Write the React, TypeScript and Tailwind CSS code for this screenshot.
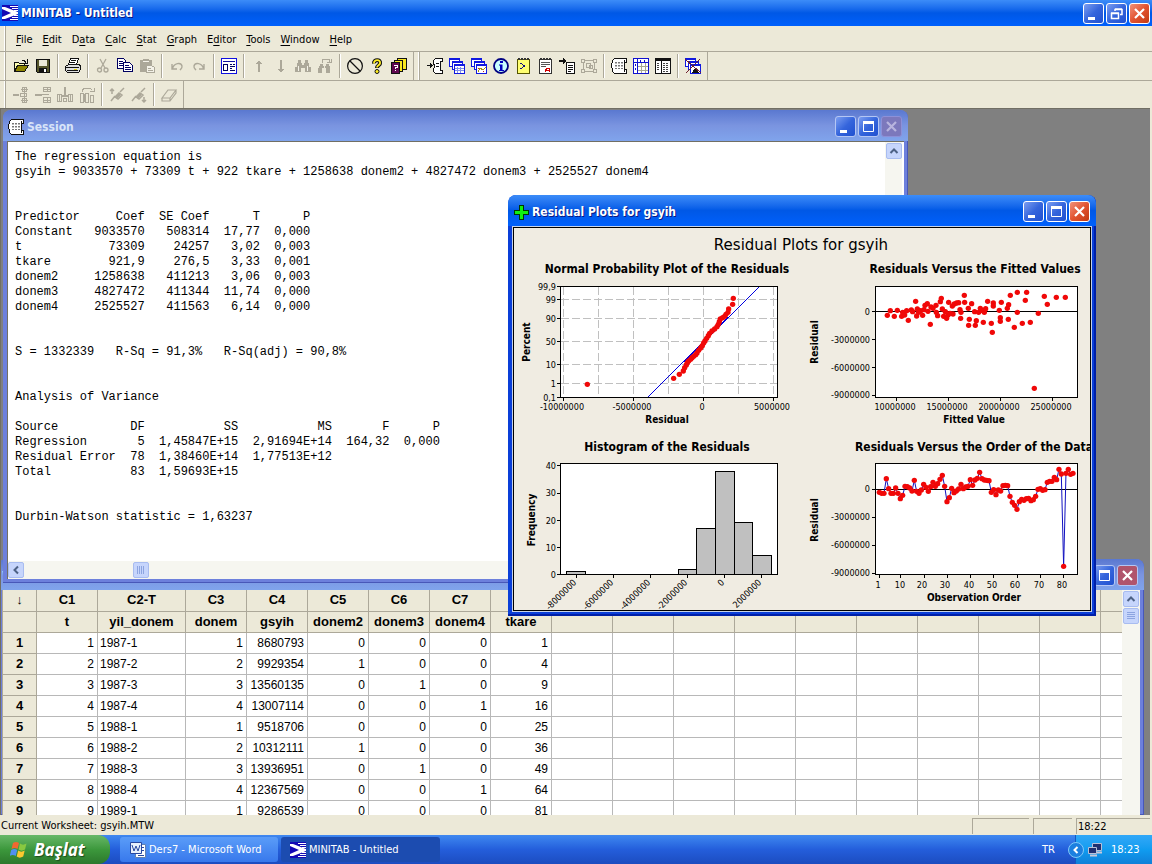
import React from 'react';
import clsx from 'clsx';

const INK = '#111111';
const OFF = '#aca899';

const Icon: React.FC<{ children: React.ReactNode; smooth?: boolean }> = ({ children, smooth }) => (
  <svg
    width="18"
    height="18"
    viewBox="-1 -1 18 18"
    fill="none"
    className="shrink-0"
    shapeRendering={smooth ? 'auto' : 'crispEdges'}
    aria-hidden="true"
  >
    {children}
  </svg>
);

const MinitabLogo: React.FC = () => (
  <svg width="16" height="16" viewBox="0 0 16 16" className="shrink-0" aria-hidden="true">
    <path d="M0 0h16v16H0z" fill="#1408b4" />
    <path d="M0 2h3l13 5v2L3 14H0v-2l9-4L0 4z" fill="#fff" />
    <path d="M8 1.500h8M10 3.500h6M12 5.500h4M12 10.500h4M10 12.500h6M8 14.500h8" stroke="#fff" />
  </svg>
);

const Scroll: React.FC = () => (
  <>
    <path
      d="M3.500.500h12v4h-2v7h2v4h-12l-2-2v-3l-1-1v-4l1-1v-2z"
      fill="#fff"
      stroke={INK}
    />
    <path d="M13.500 2v2M13.500 12v2" stroke={INK} />
    <path d="M4 4.500h8M4 7.500h8M4 10.500h8" stroke="#777" strokeDasharray="2 1" />
    <path d="M4 5.500h8M4 8.500h8" stroke="#bbb" strokeDasharray="2 1" />
  </>
);

const Stack: React.FC = () => (
  <>
    <path d="M.5.500h10v8H.5z" fill="#fff" stroke="#1018e0" />
    <path d="M1 1.500h10" stroke="#1018e0" />
    <path d="M3.500 3.500h10v8h-10z" fill="#fff" stroke="#1018e0" />
    <path d="M4 4.500h10" stroke="#1018e0" />
    <path d="M5.500 6.500h10v9h-10z" fill="#fff" stroke="#1018e0" />
    <path d="M6 7.500h10" stroke="#1018e0" />
  </>
);

const Binoculars: React.FC = () => (
  <>
    <path d="M3 2h3v3H3zM10 2h3v3h-3zM2 5h5v4H2zM9 5h5v4H9zM0 9h6v5H0zM10 9h6v5h-6zM6 7h4v3H6z" fill={OFF} />
    <path d="M3.500 8v5M12.500 8v5" stroke="#f4f2e8" />
  </>
);

type Tool = { label: string; icon: React.ReactNode; disabled?: boolean } | '|';

const FILE_TOOLS: Tool[] = [
  {
    label: 'Open',
    icon: (
      <Icon>
        <path d="M1 14V4h4l1 1h5v3" fill="#ffffb0" stroke={INK} />
        <path d="M1.500 13.500l3-6h11l-4 6z" fill="#8c8400" stroke={INK} />
        <path d="M9 2.500h2l2 2M14.500 1v4h-4" stroke={INK} />
      </Icon>
    ),
  },
  {
    label: 'Save',
    icon: (
      <Icon>
        <path d="M1.500 1.500h13v13h-12l-1-1z" fill="#55552a" stroke={INK} />
        <path d="M4 2h8v6H4z" fill="#ece9d8" />
        <path d="M4 10h8v4H4z" fill={INK} />
        <path d="M9 11h2v3H9z" fill="#fff" />
      </Icon>
    ),
  },
  '|',
  {
    label: 'Print',
    icon: (
      <Icon>
        <path d="M5.500.500h8l-2 6h-8z" fill="#fff" stroke={INK} />
        <path d="M.5 8.500l3-2h10l2 1v4l-2 3h-11l-2-2z" fill="#ddd" stroke={INK} />
        <path d="M1 9.500h13M2 12.500h11M6 2.500h5M5 4.500h5" stroke={INK} />
        <path d="M9 11h3v1H9z" fill="#e0d000" />
      </Icon>
    ),
  },
  '|',
  {
    label: 'Cut',
    disabled: true,
    icon: (
      <Icon smooth>
        <path d="M5 1l5 9M11 1L6 10" stroke={OFF} strokeWidth="1.300" />
        <circle cx="4.500" cy="12" r="2" stroke={OFF} strokeWidth="1.300" />
        <circle cx="11" cy="12" r="2" stroke={OFF} strokeWidth="1.300" />
      </Icon>
    ),
  },
  {
    label: 'Copy',
    icon: (
      <Icon>
        <path d="M.5.500h6l2 2v8h-8z" fill="#fff" stroke="#000060" />
        <path d="M2 3.500h4M2 5.500h5M2 7.500h5" stroke="#000060" />
        <path d="M6.500 4.500h6l3 3v6h-9z" fill="#fff" stroke="#000060" />
        <path d="M8 7.500h4M8 9.500h6M8 11.500h6" stroke="#000060" />
      </Icon>
    ),
  },
  {
    label: 'Paste',
    disabled: true,
    icon: (
      <Icon>
        <path d="M1 2h12v12H1zM4 1h6v1H4z" fill={OFF} />
        <path d="M4 3.500h6" stroke="#f4f2e8" />
        <path d="M7.500 7.500h5l3 2v5h-8z" fill="#f4f2e8" stroke={OFF} />
        <path d="M9 10.500h3M9 12.500h5" stroke={OFF} />
      </Icon>
    ),
  },
  '|',
  {
    label: 'Undo',
    disabled: true,
    icon: (
      <Icon smooth>
        <path d="M3 6v5h5M3.500 10.500C5 5 12 4 13 8c.4 2-1 3-2 4" stroke={OFF} strokeWidth="1.400" />
      </Icon>
    ),
  },
  {
    label: 'Redo',
    disabled: true,
    icon: (
      <Icon smooth>
        <path d="M13 6v5H8M12.500 10.500C11 5 4 4 3 8c-.4 2 1 3 2 4" stroke={OFF} strokeWidth="1.400" />
      </Icon>
    ),
  },
  '|',
  {
    label: 'Project Manager',
    icon: (
      <Icon>
        <path d="M.5.500h15v15H.5z" fill="#fff" stroke="#1010e0" />
        <path d="M2 3.500h12" stroke="#1010a0" />
        <path d="M2.500 6.500h4v6h-4zM9 6.500h2M12 6.500h2M9 8.500h5M9 10.500h2M9 12.500h5" stroke="#000060" />
      </Icon>
    ),
  },
  '|',
  {
    label: 'Previous Command',
    disabled: true,
    icon: (
      <Icon>
        <path d="M7 4h2v10H7zM5 5h6v1H5zM6 4h4v1H6zM7 3h2v1H7z" fill={OFF} />
      </Icon>
    ),
  },
  {
    label: 'Next Command',
    disabled: true,
    icon: (
      <Icon>
        <path d="M7 2h2v10H7zM5 11h6v1H5zM6 12h4v1H6zM7 13h2v1H7z" fill={OFF} />
      </Icon>
    ),
  },
  { label: 'Find', disabled: true, icon: <Icon><Binoculars /></Icon> },
  {
    label: 'Find Next',
    disabled: true,
    icon: (
      <Icon>
        <path d="M3 6h3v2H3zM9 6h3v2H9zM2 8h5v2H2zM8 8h5v2H8zM1 10h4v5H1zM9 10h4v5H9z" fill={OFF} />
        <path d="M5 4.500v-1l1-2h6l1 2M10 4.500h4v-4" stroke={OFF} />
      </Icon>
    ),
  },
  '|',
  {
    label: 'Cancel',
    icon: (
      <Icon smooth>
        <circle cx="8" cy="8" r="7.400" stroke={INK} strokeWidth="1.200" />
        <path d="M3 3l10 10" stroke={INK} strokeWidth="1.200" />
      </Icon>
    ),
  },
  {
    label: 'Help',
    icon: (
      <Icon smooth>
        <path d="M5 5.500C4.500 1 12 1 11 5.500c-.4 1.800-3 2-3 4.500" stroke={INK} strokeWidth="4" />
        <path d="M5 5.500C4.500 1 12 1 11 5.500c-.4 1.800-3 2-3 4" stroke="#ffee20" strokeWidth="1.800" />
        <circle cx="8" cy="13.500" r="2" fill="#ffee20" stroke={INK} />
      </Icon>
    ),
  },
  {
    label: 'StatGuide',
    icon: (
      <Icon>
        <path d="M6.500.500h9v11h-9z" fill="#f8e820" stroke={INK} />
        <path d="M3.500 2.500h8v11h-8z" fill="#f8e820" stroke={INK} />
        <path d="M.5 4.500h8v11h-8z" fill="#600850" stroke={INK} />
        <path d="M3 7.500h3v2H4.500v1M4 12.500h1" stroke="#fff" />
      </Icon>
    ),
  },
];

const WINDOW_TOOLS: Tool[] = [
  {
    label: 'Show Session Folder',
    icon: (
      <Icon>
        <path d="M8.500.500h7v3h-2v9h2v3h-7l-2-2v-3l1-1v-2l-1-2v-3z" fill="#fff" stroke={INK} />
        <path d="M0 7.500h6M3.500 5v5M4.500 6v3M9 5.500h3M9 8.500h3" stroke={INK} />
      </Icon>
    ),
  },
  {
    label: 'Show Worksheets Folder',
    icon: (
      <Icon>
        <Stack />
        <path d="M6 10.500h9M6 12.500h9M8.500 9v6M11.500 9v6" stroke="#8090e8" />
      </Icon>
    ),
  },
  {
    label: 'Show Graphs Folder',
    icon: (
      <Icon>
        <Stack />
        <path d="M7 14l2-4 3 2 3-3" stroke="#a09010" />
        <path d="M7 10h1v1H7zM12 13h1v1h-1z" fill="#c02020" />
      </Icon>
    ),
  },
  {
    label: 'Show Info',
    icon: (
      <Icon smooth>
        <circle cx="8" cy="8" r="7" fill="#c8ffff" stroke="#000080" strokeWidth="1.800" />
        <path d="M7 3h3v2H7zM6 6.500h3.500V12H11v1H6v-1h1V7.500H6z" fill="#0000c0" />
      </Icon>
    ),
  },
  {
    label: 'Show History',
    icon: (
      <Icon>
        <path d="M2.500 1.500h12v14h-12z" fill="#ffff70" stroke="#555500" />
        <path d="M3 1h11" stroke="#333" strokeWidth="2" strokeDasharray="2 1" />
        <path d="M5 5l5 3-5 3" stroke="#101080" />
      </Icon>
    ),
  },
  {
    label: 'Show ReportPad',
    icon: (
      <Icon>
        <path d="M2.500 1.500h12v14h-12z" fill="#fff" stroke="#333" />
        <path d="M3 1h11" stroke="#333" strokeWidth="2" strokeDasharray="2 1" />
        <path d="M4 4.500h9M4 6.500h9M4 8.500h5" stroke="#555" />
        <path d="M8.500 14v-2l2-2h2v4M8 12.500h4" stroke="#d00000" />
      </Icon>
    ),
  },
  {
    label: 'Show Related Documents',
    icon: (
      <Icon>
        <path d="M7.500 4.500h8v11h-8z" fill="#fff" stroke={INK} />
        <path d="M9 7.500h5M9 9.500h5M9 11.500h5M9 13.500h3" stroke={INK} />
        <path d="M0 2h4V0l3 3-3 3V4H0z" fill={INK} />
      </Icon>
    ),
  },
  {
    label: 'Show Design',
    disabled: true,
    icon: (
      <Icon>
        <path d="M2.500 2.500h11v11h-11zM5.500 5.500h4v4h-4zM8.500 7.500h3v3h-3z" stroke={OFF} />
        <path d="M0 1h4v4H0zM12 1h4v4h-4zM0 11h4v4H0zM12 11h4v4h-4z" fill={OFF} />
        <path d="M1 2h2v2H1zM13 2h2v2h-2zM1 12h2v2H1zM13 12h2v2h-2z" fill="#ece9d8" />
      </Icon>
    ),
  },
  '|',
  { label: 'Session Window', icon: <Icon><Scroll /></Icon> },
  {
    label: 'Current Data Window',
    icon: (
      <Icon>
        <path d="M.5.500h15v15H.5z" fill="#fff" stroke="#1010d0" />
        <path d="M1 4.500h15M4.500 1v15" stroke="#1010d0" />
        <path d="M5 8.500h10M5 12.500h10M8.500 5v10M12.500 5v10" stroke="#a8a890" />
        <path d="M7.500 2v2M11.500 2v2M2.500 6v2M2.500 10v2" stroke="#1010d0" />
      </Icon>
    ),
  },
  {
    label: 'Project Manager Window',
    icon: (
      <Icon>
        <path d="M.5.500h15v15H.5z" fill="#fff" stroke={INK} />
        <path d="M1 2h14" stroke={INK} strokeWidth="2" />
        <path d="M6.500 3v12" stroke={INK} />
        <path d="M2 5.500h3M2 7.500h3M2 9.500h3M2 11.500h3M8 5.500h6M8 7.500h6M8 9.500h6M8 11.500h6M8 13.500h6" stroke="#444" strokeDasharray="2 1" />
      </Icon>
    ),
  },
  '|',
  {
    label: 'Close All Graphs',
    icon: (
      <Icon>
        <Stack />
        <path d="M7 15l3-5 4 5z" fill={INK} />
        <path d="M0 1l16 14M15 1L1 15" stroke="#702030" />
      </Icon>
    ),
  },
];

const EDIT_TOOLS: Tool[] = [
  {
    label: 'Insert Cells',
    disabled: true,
    icon: (
      <Icon>
        <path d="M0 7h6v2H0z" fill={OFF} />
        <path d="M9.500.500h4v4h-4zM7.500 6.500h6v3h-6zM9.500 11.500h4v4h-4zM8 2.500h7M8 13.500h7M11.500 0v16" stroke={OFF} />
      </Icon>
    ),
  },
  {
    label: 'Insert Rows',
    disabled: true,
    icon: (
      <Icon>
        <path d="M0 7h7v2H0z" fill={OFF} />
        <path d="M8.500.500h7v4h-7zM7 7.500h7M8.500 10.500h7v5h-7zM12 0v5M12 10v5M8 2.500h8M8 13.500h8" stroke={OFF} />
      </Icon>
    ),
  },
  {
    label: 'Insert Columns',
    disabled: true,
    icon: (
      <Icon>
        <path d="M7 0h2v9H7zM5 8h6v2H5z" fill={OFF} />
        <path d="M.5 7.500h4v7h-4zM6.500 11.500h3v3h-3zM11.500 7.500h4v7h-4zM2.500 8v6M13.500 8v6" stroke={OFF} />
      </Icon>
    ),
  },
  {
    label: 'Move Columns',
    disabled: true,
    icon: (
      <Icon>
        <path d="M1.500 6.500h3v9h-3zM6.500 6.500h3v9h-3zM11.500 8.500h3v7h-3zM3.500 4.500v-2l2-1h6l2 2M11 4.500h4v-4" stroke={OFF} />
        <path d="M4 7h3v8H4z" fill={OFF} />
      </Icon>
    ),
  },
  '|',
  {
    label: 'Previous Brush',
    disabled: true,
    icon: (
      <Icon smooth>
        <path d="M2 14l4-5M6 10l4-4 3 2-4 4zM11 5l4-4M3 7V2M1 4l2-2 2 2" stroke={OFF} strokeWidth="1.500" />
        <path d="M6 10l4-4 2 2-4 4z" fill={OFF} />
      </Icon>
    ),
  },
  {
    label: 'Next Brush',
    disabled: true,
    icon: (
      <Icon smooth>
        <path d="M1 14l4-5M5 10l4-4 3 2-4 4zM10 5l4-4M13 10v5M11 13l2 2 2-2" stroke={OFF} strokeWidth="1.500" />
        <path d="M5 10l4-4 2 2-4 4z" fill={OFF} />
      </Icon>
    ),
  },
  '|',
  {
    label: 'Clear Cells',
    disabled: true,
    icon: (
      <Icon smooth>
        <path d="M1 11l6-8h8l-6 8zM1 11v3h8l6-8V3M9 11v3" stroke={OFF} strokeWidth="1.200" />
      </Icon>
    ),
  },
];

const Separator: React.FC = () => (
  <div className="flex w-2 justify-center self-stretch py-0.5">
    <div className="w-px bg-[#aca899]" />
    <div className="w-px bg-white" />
  </div>
);

const Grip: React.FC = () => <div className="mx-1 w-0.5 self-stretch border-r border-[#aca899] bg-white" />;

const Toolbar: React.FC<{ tools: Tool[]; label: string }> = ({ tools, label }) => (
  <div role="toolbar" aria-label={label} className="flex items-center border-r border-[#aca899] pr-[3px]">
    <Grip />
    {tools.map((tool, i) =>
      tool === '|' ? (
        <Separator key={i} />
      ) : (
        <button
          key={i}
          type="button"
          aria-label={tool.label}
          disabled={tool.disabled}
          className="flex h-[22px] w-[22px] items-center justify-center"
        >
          {tool.icon}
        </button>
      ),
    )}
  </div>
);

type ButtonKind = 'min' | 'max' | 'restore' | 'close';

const GLYPHS: Record<ButtonKind, React.ReactNode> = {
  min: <path d="M4 13h7v3H4z" fill="currentColor" />,
  max: (
    <>
      <path d="M4.500 5.500h10v9h-10z" stroke="currentColor" />
      <path d="M4 4h11v3H4z" fill="currentColor" />
    </>
  ),
  restore: (
    <path d="M4.500 9.500h7v5h-7zM4 9h8M8 7V5.500h7v5h-2M8 5h7" stroke="currentColor" strokeWidth="1.500" />
  ),
  close: <path d="M5 5l9 9M14 5l-9 9" stroke="currentColor" strokeWidth="2.200" />,
};

const CaptionButton: React.FC<{ kind: ButtonKind; tone?: 'active' | 'inactive' | 'off' }> = ({
  kind,
  tone = 'active',
}) => (
  <button
    type="button"
    aria-label={kind}
    disabled={tone === 'off'}
    className={clsx(
      'h-[21px] w-[21px] rounded-[3px] border',
      tone === 'active' && 'border-white text-white',
      tone === 'inactive' && 'border-[#b4c6f4] text-white',
      tone === 'off' && 'border-[#8d90d8] bg-[#7c78bc] text-[#b8b4de]',
      tone === 'active' && kind === 'close' && 'bg-linear-to-br from-[#f09078] via-[#e25330] to-[#c23a10]',
      tone === 'inactive' && kind === 'close' && 'bg-[#b0546c]',
      tone !== 'off' && kind !== 'close' && 'bg-linear-to-br from-[#7c9df0] via-[#3565dc] to-[#2050d0]',
    )}
  >
    <svg width="19" height="19" viewBox="0 0 19 19" fill="none" aria-hidden="true">
      {GLYPHS[kind]}
    </svg>
  </button>
);

const MdiWindow: React.FC<{
  title: string;
  icon?: React.ReactNode;
  active?: boolean;
  closeTone?: 'active' | 'inactive' | 'off';
  className: string;
  children: React.ReactNode;
}> = ({ title, icon, active, closeTone, className, children }) => {
  const tone = active ? 'active' : 'inactive';
  return (
    <section
      className={clsx(
        'absolute flex flex-col rounded-t-lg px-1 pb-1',
        active
          ? 'bg-[#0a3fd8] shadow-[inset_-2px_-2px_0_#0020a8]'
          : 'bg-[#6d80dc] shadow-[inset_-1px_-1px_0_#4858b8]',
        className,
      )}
    >
      <header
        className={clsx(
          '-mx-1 flex h-[31px] shrink-0 items-center gap-[2px] rounded-t-lg pt-[2px] pr-[6px] pl-1',
          active
            ? 'bg-linear-to-b from-[#3c8cf8] via-[#0058e6] to-[#0060fc]'
            : 'bg-linear-to-b from-[#5a78d0] via-[#7a94e0] to-[#80a4ec]',
        )}
      >
        {icon}
        <h2
          className={clsx(
            'flex-1 truncate text-[12px] font-bold',
            active ? 'text-white [text-shadow:1px_1px_0_#0a1883]' : 'text-[#d8e4f8]',
          )}
        >
          {title}
        </h2>
        <CaptionButton kind="min" tone={tone} />
        <CaptionButton kind="max" tone={tone} />
        <CaptionButton kind="close" tone={closeTone ?? tone} />
      </header>
      {children}
    </section>
  );
};

const ScrollButton: React.FC<{ dir: 'up' | 'left' | 'thumb-x' | 'thumb-y' }> = ({ dir }) => (
  <button
    type="button"
    aria-label={dir}
    className="flex h-4 w-4 shrink-0 items-center justify-center rounded-[2px] border border-[#a8bcf0] bg-[#c6d5fc] text-[#4d6185]"
  >
    <svg width="10" height="10" viewBox="0 0 10 10" fill="none" stroke="currentColor" aria-hidden="true">
      {dir === 'up' && <path d="M1.500 7L5 3.500 8.500 7" strokeWidth="2" />}
      {dir === 'left' && <path d="M7 1.500L3.500 5 7 8.500" strokeWidth="2" />}
      {dir === 'thumb-x' && <path d="M1.500 1v8M3.500 1v8M5.500 1v8M7.500 1v8" stroke="#8ca4e0" />}
      {dir === 'thumb-y' && <path d="M1 1.500h8M1 3.500h8M1 5.500h8M1 7.500h8" stroke="#8ca4e0" />}
    </svg>
  </button>
);

const SESSION_TEXT = `The regression equation is
gsyih = 9033570 + 73309 t + 922 tkare + 1258638 donem2 + 4827472 donem3 + 2525527 donem4


Predictor     Coef  SE Coef      T      P
Constant   9033570   508314  17,77  0,000
t            73309    24257   3,02  0,003
tkare        921,9    276,5   3,33  0,001
donem2     1258638   411213   3,06  0,003
donem3     4827472   411344  11,74  0,000
donem4     2525527   411563   6,14  0,000


S = 1332339   R-Sq = 91,3%   R-Sq(adj) = 90,8%


Analysis of Variance

Source          DF           SS           MS       F      P
Regression       5  1,45847E+15  2,91694E+14  164,32  0,000
Residual Error  78  1,38460E+14  1,77513E+12
Total           83  1,59693E+15


Durbin-Watson statistic = 1,63237`;

const HEADERS = ['C1', 'C2-T', 'C3', 'C4', 'C5', 'C6', 'C7', 'C8'];
const NAMES = ['t', 'yil_donem', 'donem', 'gsyih', 'donem2', 'donem3', 'donem4', 'tkare'];
const GSYIH = [8680793, 9929354, 13560135, 13007114, 9518706, 10312111, 13936951, 12367569, 9286539];
const SPARE = Array.from({ length: 10 }, (_, i) => i);

const ROWS = GSYIH.map((value, i) => {
  const quarter = (i % 4) + 1;
  return [
    i + 1,
    `${1987 + Math.floor(i / 4)}-${quarter}`,
    quarter,
    value,
    quarter === 2 ? 1 : 0,
    quarter === 3 ? 1 : 0,
    quarter === 4 ? 1 : 0,
    (i + 1) ** 2,
  ];
});

const Worksheet: React.FC = () => (
  <table className="w-[1159px] shrink-0 table-fixed border-collapse font-['Liberation_Sans',Arial,sans-serif] text-[12px] leading-5 [&_td]:h-[21px] [&_td]:border [&_td]:border-[#b8b8b8] [&_td]:p-0 [&_th]:h-[21px] [&_th]:border [&_th]:border-t-0 [&_th]:border-[#aca899] [&_th]:bg-[#ece9d8] [&_th]:p-0 [&_th]:text-[13px]">
    <colgroup>
      <col className="w-[34px]" />
      {HEADERS.map((h) => (
        <col key={h} className={h === 'C2-T' ? 'w-[88px]' : 'w-[61px]'} />
      ))}
      {SPARE.map((i) => (
        <col key={i} className="w-[61px]" />
      ))}
    </colgroup>
    <thead>
      <tr>
        <th>↓</th>
        {HEADERS.map((h) => (
          <th key={h}>{h}</th>
        ))}
        {SPARE.map((i) => (
          <th key={i} />
        ))}
      </tr>
      <tr>
        <th />
        {NAMES.map((n) => (
          <th key={n}>{n}</th>
        ))}
        {SPARE.map((i) => (
          <th key={i} />
        ))}
      </tr>
    </thead>
    <tbody>
      {ROWS.map((row, r) => (
        <tr key={r}>
          <th>{r + 1}</th>
          {row.map((cell, c) => (
            <td key={c}>
              <div className={c === 1 ? 'pl-[2px] text-left' : 'pr-[3px] text-right'}>{cell}</div>
            </td>
          ))}
          {SPARE.map((i) => (
            <td key={i} />
          ))}
        </tr>
      ))}
    </tbody>
  </table>
);

// Point lists are in thirds of a pixel, relative to each panel's own origin.
const PROBABILITY: [number, number][] = [
  [238, 568], [497, 550], [514, 538], [526, 528], [530, 518], [535, 510], [538, 503], [542, 498],
  [548, 493], [552, 488], [557, 484], [563, 479], [567, 474], [572, 466], [578, 459], [583, 452],
  [587, 444], [591, 438], [596, 430], [601, 422], [605, 415], [612, 408], [620, 402], [627, 395],
  [631, 388], [634, 380], [637, 372], [644, 368], [650, 364], [654, 358], [660, 352], [662, 342],
  [674, 328], [676, 310],
];

const FITTED: [number, number][] = [
  [262, 271], [271, 257], [283, 274], [292, 256], [305, 274], [308, 262], [314, 270], [320, 257],
  [325, 286], [334, 255], [338, 260], [347, 229], [350, 273], [352, 252], [356, 262], [362, 257],
  [368, 271], [372, 254], [375, 241], [382, 236], [384, 259], [391, 298], [393, 246], [399, 250],
  [408, 241], [409, 262], [413, 272], [421, 230], [424, 220], [427, 252], [431, 274], [436, 260],
  [440, 280], [444, 270], [446, 232], [450, 265], [457, 243], [459, 267], [463, 237], [470, 234],
  [476, 233], [480, 254], [483, 262], [482, 280], [493, 211], [494, 232], [505, 250], [506, 301],
  [508, 283], [515, 236], [524, 260], [526, 301], [529, 287], [536, 262], [541, 250], [545, 256],
  [550, 292], [553, 262], [557, 251], [563, 229], [574, 295], [577, 322], [580, 234], [580, 243],
  [598, 256], [601, 278], [601, 289], [604, 232], [622, 250], [626, 239], [625, 283], [631, 211],
  [643, 307], [652, 202], [652, 262], [667, 295], [676, 226], [680, 202], [691, 292], [703, 490],
  [715, 265], [733, 214], [742, 238], [769, 217], [796, 217],
];

const ORDER_Y = [
  187, 190, 190, 146, 176, 190, 190, 174, 190, 206, 196, 169, 170, 174, 183, 151, 184, 190, 180, 163,
  172, 184, 170, 157, 169, 161, 148, 136, 169, 215, 203, 175, 188, 183, 177, 163, 176, 171, 169, 149,
  166, 150, 145, 127, 146, 150, 151, 152, 187, 179, 194, 180, 183, 167, 166, 167, 199, 217, 226, 238,
  215, 208, 211, 206, 205, 212, 209, 199, 178, 176, 181, 179, 157, 154, 154, 142, 149, 118, 132, 409,
  130, 118, 133, 130,
];
const ORDER: [number, number][] = ORDER_Y.map((y, i) => [238 + i * 7, y]);

const BARS: [number, number, number][] = [
  [566, 19, 571], [678, 18, 569], [696, 19, 528], [715, 19, 471], [734, 18, 522], [752, 19, 555],
];

const Dots: React.FC<{ points: [number, number][]; origin: string }> = ({ points, origin }) => (
  <g transform={`${origin} scale(0.3333)`} fill="#f00808">
    {points.map(([x, y], i) => (
      <circle key={i} cx={x} cy={y} r="8" />
    ))}
  </g>
);

const Label: React.FC<{
  x: number;
  y: number;
  size?: number;
  bold?: boolean;
  anchor?: 'start' | 'middle' | 'end';
  rotate?: number;
  children: React.ReactNode;
}> = ({ x, y, size = 9, bold, anchor = 'middle', rotate, children }) => (
  <text
    x={x}
    y={y}
    fontSize={size}
    fontWeight={bold ? 700 : 400}
    textAnchor={anchor}
    transform={rotate ? `rotate(${rotate} ${x} ${y})` : undefined}
  >
    {children}
  </text>
);

const ticks = (xs: number[], y: number) => xs.map((x) => `M${x} ${y}v3`).join('');
const yTicks = (ys: number[], x: number) => ys.map((y) => `M${x} ${y}h-3`).join('');

const ResidualPlots: React.FC = () => (
  <svg
    viewBox="515 228 574 382"
    preserveAspectRatio="xMidYMid meet"
    className="block h-full w-full font-['DejaVu_Sans_Condensed','DejaVu_Sans',sans-serif]"
    role="img"
    aria-label="Residual Plots for gsyih"
  >
    <g className="font-['DejaVu_Sans',sans-serif]">
      <Label x={801} y={250} size={15}>Residual Plots for gsyih</Label>
    </g>

    <Label x={667} y={273} size={12} bold>Normal Probability Plot of the Residuals</Label>
    <g shapeRendering="crispEdges" fill="none" stroke="#000">
      <path d="M560.500 286.500h217v111h-217z" fill="#fff" />
      <path
        d="M563.500 287v110M598.500 287v110M633.500 287v110M668.500 287v110M703.500 287v110M738.500 287v110M773.500 287v110M561 299.500h216M561 318.500h216M561 341.500h216M561 364.500h216M561 383.500h216"
        stroke="#c0c0c0"
        strokeDasharray="8 3"
      />
      <path d={ticks([563.5, 633.5, 703.5, 773.5], 398)} />
      <path d={yTicks([286.5, 299.5, 318.5, 341.5, 364.5, 383.5, 397.5], 560)} />
      <path d="M648 397L759 287" stroke="#0000e0" />
    </g>
    <Dots points={PROBABILITY} origin="translate(508 195)" />
    {['99,9', '99', '90', '50', '10', '1', '0,1'].map((t, i) => (
      <Label key={t} x={556} y={[290, 303, 322, 345, 368, 387, 401][i]} anchor="end">{t}</Label>
    ))}
    {['-10000000', '-5000000', '0', '5000000'].map((t, i) => (
      <Label key={t} x={[562, 632, 702, 772][i]} y={410}>{t}</Label>
    ))}
    <Label x={667} y={423} size={10} bold>Residual</Label>
    <Label x={530} y={342} size={10} bold rotate={-90}>Percent</Label>

    <Label x={975} y={273} size={12} bold>Residuals Versus the Fitted Values</Label>
    <g shapeRendering="crispEdges" fill="none" stroke="#000">
      <path d="M875.500 286.500h202v111h-202z" fill="#fff" />
      <path d="M876 311.500h201" />
      <path d={ticks([896.5, 948.5, 1000.5, 1052.5], 398)} />
      <path d={yTicks([311.5, 339.5, 367.5, 395.5], 875)} />
    </g>
    <Dots points={FITTED} origin="translate(800 225)" />
    {['0', '-3000000', '-6000000', '-9000000'].map((t, i) => (
      <Label key={t} x={870} y={[315, 343, 371, 398][i]} anchor="end">{t}</Label>
    ))}
    {['10000000', '15000000', '20000000', '25000000'].map((t, i) => (
      <Label key={t} x={[895, 947, 999, 1051][i]} y={410}>{t}</Label>
    ))}
    <Label x={974} y={423} size={10} bold>Fitted Value</Label>
    <Label x={818} y={342} size={10} bold rotate={-90}>Residual</Label>

    <Label x={667} y={451} size={12} bold>Histogram of the Residuals</Label>
    <g shapeRendering="crispEdges" fill="none" stroke="#000">
      <path d="M560.500 463.500h217v111h-217z" fill="#fff" />
      {BARS.map(([x, w, y]) => (
        <rect key={x} x={x + 0.5} y={y + 0.5} width={w} height={574 - y} fill="#c0c0c0" />
      ))}
      <path d={ticks([576.5, 613.5, 650.5, 687.5, 724.5, 761.5], 575)} />
      <path d={yTicks([465.5, 493.5, 520.5, 547.5, 574.5], 560)} />
    </g>
    {['40', '30', '20', '10', '0'].map((t, i) => (
      <Label key={t} x={556} y={[469, 496, 524, 551, 578][i]} anchor="end">{t}</Label>
    ))}
    {['-8000000', '-6000000', '-4000000', '-2000000', '0', '2000000'].map((t, i) => (
      <Label key={t} x={[577, 614, 651, 688, 725, 762][i]} y={583} anchor="end" rotate={-45}>{t}</Label>
    ))}
    <Label x={535} y={520} size={10} bold rotate={-90}>Frequency</Label>

    <Label x={855} y={451} size={12} bold anchor="start">Residuals Versus the Order of the Data</Label>
    <g shapeRendering="crispEdges" fill="none" stroke="#000">
      <path d="M875.500 463.500h202v111h-202z" fill="#fff" />
      <path d="M876 489.500h201" />
      <path d={ticks([879.5, 900.5, 924.5, 947.5, 970.5, 993.5, 1017.5, 1040.5, 1063.5], 575)} />
      <path d={yTicks([489.5, 517.5, 545.5, 573.5], 875)} />
    </g>
    <g transform="translate(800 430) scale(0.3333)" fill="none" stroke="#1010c0" strokeWidth="3">
      <polyline points={ORDER.map((p) => p.join(',')).join(' ')} />
    </g>
    <Dots points={ORDER} origin="translate(800 430)" />
    {['0', '-3000000', '-6000000', '-9000000'].map((t, i) => (
      <Label key={t} x={870} y={[492, 520, 548, 576][i]} anchor="end">{t}</Label>
    ))}
    {['1', '10', '20', '30', '40', '50', '60', '70', '80'].map((t, i) => (
      <Label key={t} x={[878, 900, 922, 945, 969, 992, 1015, 1039, 1062][i]} y={588}>{t}</Label>
    ))}
    <Label x={974} y={601} size={10} bold>Observation Order</Label>
    <Label x={818} y={520} size={10} bold rotate={-90}>Residual</Label>
  </svg>
);

const MENUS: [string, string, string][] = [
  ['', 'F', 'ile'], ['', 'E', 'dit'], ['D', 'a', 'ta'], ['', 'C', 'alc'], ['', 'S', 'tat'],
  ['', 'G', 'raph'], ['E', 'd', 'itor'], ['', 'T', 'ools'], ['', 'W', 'indow'], ['', 'H', 'elp'],
];

const MenuBar: React.FC = () => (
  <nav className="flex h-[26px] shrink-0 items-center border-b border-[#aca899]">
    <Grip />
    <div className="flex gap-[10px] pt-[2px] pl-[6px]">
      {MENUS.map(([pre, key, post]) => (
        <button key={pre + key + post} type="button">
          {pre}
          <span className="underline underline-offset-2">{key}</span>
          {post}
        </button>
      ))}
    </div>
  </nav>
);

const Taskbar: React.FC = () => (
  <footer className="flex h-[29px] shrink-0 items-stretch bg-linear-to-b from-[#4088f0] via-[#245edb] to-[#1c4cc0] text-white">
    <button
      type="button"
      className="flex w-[110px] items-center gap-[6px] rounded-r-xl bg-linear-to-b from-[#68b868] via-[#3c983c] to-[#2c782c] pl-[10px] font-['Open_Sans',sans-serif] text-[17px] font-bold italic [text-shadow:1px_1px_1px_#1c4c1c]"
    >
      <svg width="18" height="18" viewBox="0 0 18 18" aria-hidden="true">
        <path d="M3 2c2-1.500 4-1.500 6 0L7.500 8C5.500 6.500 3.500 6.500 1.500 8z" fill="#f06830" />
        <path d="M10 2.500c2 1.500 4 1.500 6.500 0L15 8.500c-2.500 1.500-4.500 1.500-6.500 0z" fill="#88c840" />
        <path d="M1.200 9c2-1.500 4-1.500 6 0l-1.500 6c-2-1.500-4-1.500-6 0z" fill="#5090f0" />
        <path d="M8.200 9.500c2 1.500 4 1.500 6.500 0l-1.500 6c-2.500 1.500-4.500 1.500-6.500 0z" fill="#fcc830" />
      </svg>
      Başlat
    </button>
    <div className="flex flex-1 items-center gap-[3px] pl-[10px]">
      <button
        type="button"
        className="flex h-[25px] w-[158px] items-center gap-[3px] rounded-[3px] bg-linear-to-b from-[#5a9cf8] to-[#3878ec] pl-[10px]"
      >
        <svg width="16" height="16" viewBox="0 0 16 16" aria-hidden="true">
          <path d="M5.500 2.500h10v13h-10z" fill="#fff" stroke="#6080b0" />
          <path d="M.5.500h11v11H.5z" fill="#e8f0fc" stroke="#2848a0" />
          <path d="M2 3l2 6 2-5 2 5 2-6M11 5.500h3M12 8.500h2M8 13.500h6" stroke="#2848a0" fill="none" />
        </svg>
        Ders7 - Microsoft Word
      </button>
      <button
        type="button"
        className="flex h-[25px] w-[159px] items-center gap-[3px] rounded-[3px] bg-[#1c4cb0] pl-[9px]"
      >
        <MinitabLogo />
        MINITAB - Untitled
      </button>
    </div>
    <div className="flex items-center pr-5">TR</div>
    <div className="flex w-[77px] items-center border-l border-[#1458c0] bg-linear-to-b from-[#30a8f8] via-[#109cf0] to-[#1080d8]">
      <button
        type="button"
        aria-label="Show hidden icons"
        className="-ml-2 flex h-4 w-4 items-center justify-center rounded-full border border-[#80c8f8] bg-[#1c80e0]"
      >
        <svg width="8" height="8" viewBox="0 0 8 8" fill="none" aria-hidden="true">
          <path d="M5.500 1L2.500 4l3 3" stroke="#fff" strokeWidth="2" />
        </svg>
      </button>
      <svg width="16" height="16" viewBox="0 0 16 16" className="mr-2 ml-[3px]" aria-hidden="true">
        <path d="M5.500 1.500h9v7h-9z" fill="#203070" stroke="#b8c0d8" />
        <path d="M1.500 5.500h8v6h-8z" fill="#203070" stroke="#b8c0d8" />
        <path d="M3 13.500h7M10 10.500h5" stroke="#c8c8d8" strokeWidth="2" />
      </svg>
      18:23
    </div>
  </footer>
);

const App: React.FC = () => (
  <div className="flex h-screen flex-col overflow-hidden bg-[#ece9d8] font-['DejaVu_Sans_Condensed','DejaVu_Sans',sans-serif] text-[11px] leading-4 text-black">
    <header className="flex h-[26px] shrink-0 items-center gap-[2px] bg-linear-to-b from-[#3c8cf8] via-[#0058e6] to-[#0060fc] pr-[2px] pl-[2px]">
      <MinitabLogo />
      <h1 className="flex-1 pl-px text-[12px] font-bold text-white [text-shadow:1px_1px_0_#0a1883]">
        MINITAB - Untitled
      </h1>
      <CaptionButton kind="min" />
      <CaptionButton kind="restore" />
      <CaptionButton kind="close" />
    </header>

    <MenuBar />
    <div className="flex h-7 shrink-0">
      <Toolbar label="Standard" tools={FILE_TOOLS} />
      <Toolbar label="Project Manager" tools={WINDOW_TOOLS} />
    </div>
    <div className="flex h-7 shrink-0 border-t border-[#aca899]">
      <Toolbar label="Worksheet" tools={EDIT_TOOLS} />
    </div>

    <main className="relative mr-0.5 flex-1 overflow-hidden border-t border-l border-[#716f64] bg-[#808080]">
      <MdiWindow
        title="Worksheet"
        closeTone="inactive"
        className="top-[450px] right-[6px] bottom-0 left-[-3px] pb-0!"
      >
        <div className="flex min-h-0 flex-1 bg-white">
          <div className="min-w-0 flex-1 overflow-hidden">
            <Worksheet />
          </div>
          <div className="flex w-[18px] shrink-0 flex-col items-center gap-px bg-[#f6f6f0] pt-px">
            <ScrollButton dir="up" />
            <ScrollButton dir="thumb-y" />
          </div>
        </div>
      </MdiWindow>

      <MdiWindow
        title="Session"
        closeTone="off"
        icon={<Icon><Scroll /></Icon>}
        className="top-[1px] left-[2px] h-[473px] w-[905px]"
      >
        <div className="flex min-h-0 flex-1 flex-col border-t border-l border-[#716f64] bg-white">
          <div className="flex min-h-0 flex-1">
            <pre className="flex-1 overflow-hidden pt-2 pl-[7px] font-['Liberation_Mono','Courier_New',monospace] text-[12px] leading-[15px]">
              {SESSION_TEXT}
            </pre>
            <div className="mr-0.5 flex w-[17px] flex-col items-center bg-[#f6f6f0] pt-px">
              <ScrollButton dir="up" />
            </div>
          </div>
          <div className="flex h-[18px] items-center gap-[109px] bg-[#f6f6f0]">
            <ScrollButton dir="left" />
            <ScrollButton dir="thumb-x" />
          </div>
        </div>
      </MdiWindow>

      <MdiWindow
        title="Residual Plots for gsyih"
        active
        icon={
          <Icon>
            <path d="M6 1h5v5h5v5h-5v5H6v-5H1V6h5z" fill="#003800" />
            <path d="M7 2h3v5h5v3h-5v5H7v-5H2V7h5z" fill="#10f010" />
          </Icon>
        }
        className="top-[86px] left-[507px] h-[421px] w-[588px]"
      >
        <div className="min-h-0 flex-1 border border-[#c8d4e8]">
          <div className="h-full border border-black bg-[#f0ece2]">
            <ResidualPlots />
          </div>
        </div>
      </MdiWindow>
    </main>

    <div className="flex h-5 shrink-0 items-center gap-1 pt-[2px] pr-0.5 pl-[1px]">
      <p className="flex-1">Current Worksheet: gsyih.MTW</p>
      <div className="h-4 w-[57px] border-t border-l border-[#aca899]" />
      <div className="h-4 w-[39px] border-t border-l border-[#aca899]" />
      <div className="h-4 w-[74px] border-t border-l border-[#aca899] pl-px">18:22</div>
    </div>
    <Taskbar />
  </div>
);

export default App;
